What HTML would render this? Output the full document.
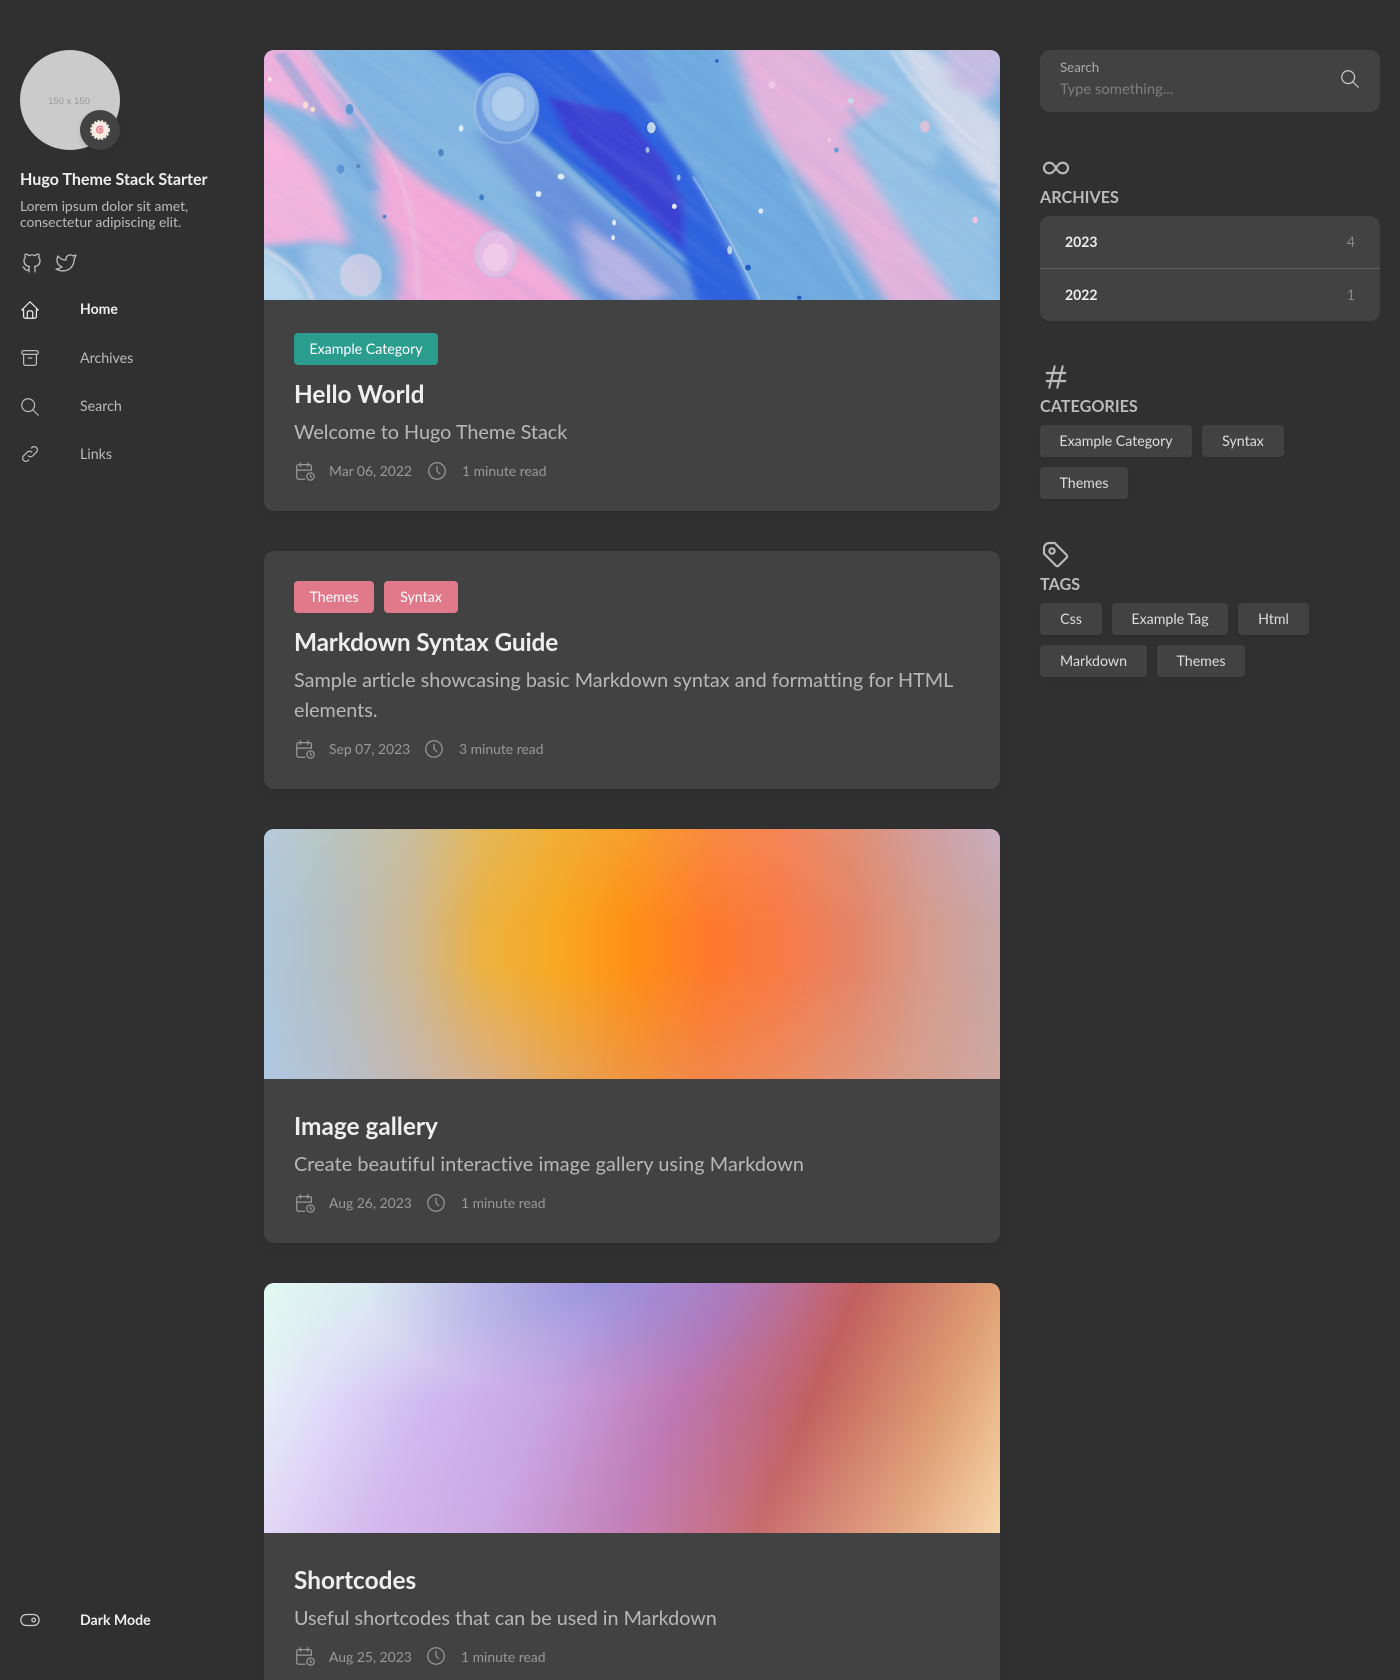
<!DOCTYPE html>
<html lang="en"><head><meta charset="utf-8"><title>Hugo Theme Stack Starter</title>
<style>
*{box-sizing:border-box;margin:0;padding:0}
html,body{width:1400px;height:1680px;overflow:hidden;background:#303030}
body{position:relative;font-family:"Lato","Carlito","Liberation Sans",sans-serif;color:#eee;font-variant-ligatures:none}
.t{position:absolute;white-space:nowrap;line-height:20px}
svg.i{position:absolute;fill:none;stroke:currentColor;stroke-width:1.33;stroke-linecap:round;stroke-linejoin:round}
.card{position:absolute;left:264px;width:736px;background:#424242;border-radius:10px;box-shadow:0 4px 8px rgba(0,0,0,.06)}
.img{position:absolute;left:264px;width:736px;height:250px;border-radius:10px 10px 0 0;overflow:hidden}
.h{font-size:24.4px;font-weight:700;color:#eee}
.s{font-size:19.8px;color:#b8b8b8}
.m{font-size:13.9px;color:#999}
.chip{position:absolute;height:32px;line-height:34px;border-radius:4px;text-align:center;font-size:14.2px;color:#fff}
.tag{position:absolute;height:32px;line-height:34px;border-radius:4px;text-align:center;font-size:14.2px;color:#ddd;background:#424242;box-shadow:0 2px 4px rgba(0,0,0,.05)}
.nav{font-size:14.2px;color:#bbb}
.wt{font-size:16.2px;font-weight:700;color:#bbb}
.box{position:absolute;left:1040px;width:340px;background:#424242;border-radius:10px}
.layer{position:absolute;inset:0}
</style></head><body>

<!-- left sidebar -->
<div style="position:absolute;left:20px;top:50px;width:100px;height:100px;border-radius:50%;background:#cbcbcb"></div>
<div class="t" style="left:20px;top:92px;width:98px;text-align:center;font:9.500px/20px 'Liberation Sans',sans-serif;color:#999">150 x 150</div>
<div style="position:absolute;left:80px;top:110px;width:40px;height:40px;border-radius:50%;background:#424242;box-shadow:0 2px 6px rgba(0,0,0,.1)"></div>
<svg style="position:absolute;left:90px;top:120px" width="20" height="20" viewBox="0 0 20 20"><circle cx="10" cy="10" r="9" fill="none" stroke="#e4e0cc" stroke-width="2" stroke-dasharray="2.200 1.400"/><circle cx="10" cy="10" r="8.600" fill="#f7ece4"/><path d="M10.400 10.600c-1 .3-1.600-.9-.8-1.700 1.200-1 3-.2 3 1.500 0 2-2.500 3-4.300 2-2-1.100-2-4 -.3-5.300 1.400-1 3-1 4.300-.2" fill="none" stroke="#ee7f8c" stroke-width="1.500" stroke-linecap="round"/></svg>

<div class="t" style="left:20px;top:170px;font-size:16.100px;font-weight:700;color:#eee">Hugo Theme Stack Starter</div>
<div class="t" style="left:20px;top:196px;font-size:13.900px;color:#bbb">Lorem ipsum dolor sit amet,</div>
<div class="t" style="left:20px;top:212px;font-size:13.900px;color:#bbb">consectetur adipiscing elit.</div>

<svg class="i" style="left:20px;top:251px;color:#bbb" width="24" height="24" viewBox="0 0 24 24"><path d="M9 19c-4.300 1.400-4.300-2.500-6-3m12 5v-3.500c0-1 .1-1.400-.5-2 2.800-.3 5.500-1.400 5.500-6a4.600 4.600 0 0 0-1.300-3.200 4.200 4.200 0 0 0-.1-3.200s-1.100-.3-3.500 1.300a12.300 12.300 0 0 0-6.200 0C6.500 2.800 5.400 3.100 5.400 3.100a4.200 4.200 0 0 0-.1 3.200A4.600 4.600 0 0 0 4 9.500c0 4.600 2.700 5.700 5.500 6-.6.6-.6 1.200-.5 2V21"/></svg>
<svg class="i" style="left:54px;top:251px;color:#bbb" width="24" height="24" viewBox="0 0 24 24"><path d="M22 4.010c-1 .49-1.980.689-3 .99-1.121-1.265-2.783-1.335-4.380-.737S11.977 6.323 12 8v1c-3.245.083-6.135-1.395-8-4 0 0-4.182 7.433 4 11-1.872 1.247-3.739 2.088-6 2 3.308 1.803 6.913 2.423 10.034 1.517 3.580-1.040 6.522-3.723 7.651-7.742a13.840 13.840 0 0 0 .497-3.753c-.002-.249 1.510-2.772 1.818-4.013z"/></svg>

<svg class="i" style="left:19px;top:299px;color:#eee" width="22" height="22" viewBox="0 0 24 24"><polyline points="5 12 3 12 12 3 21 12 19 12"/><path d="M5 12v7a2 2 0 0 0 2 2h10a2 2 0 0 0 2-2v-7"/><path d="M9 21v-6a2 2 0 0 1 2-2h2a2 2 0 0 1 2 2v6"/></svg>
<div class="t" style="left:80px;top:299px;font-size:14px;font-weight:700;color:#eee">Home</div>
<svg class="i" style="left:19px;top:347px;color:#bbb" width="22" height="22" viewBox="0 0 24 24"><rect x="3" y="4" width="18" height="4" rx="2"/><path d="M5 8v10a2 2 0 0 0 2 2h10a2 2 0 0 0 2-2V8"/><line x1="10" y1="12" x2="14" y2="12"/></svg>
<div class="t nav" style="left:80px;top:349px">Archives</div>
<svg class="i" style="left:19px;top:396px;color:#bbb" width="22" height="22" viewBox="0 0 24 24"><circle cx="10" cy="10" r="7"/><line x1="21" y1="21" x2="15" y2="15"/></svg>
<div class="t nav" style="left:80px;top:397px">Search</div>
<svg class="i" style="left:19px;top:443px;color:#bbb" width="22" height="22" viewBox="0 0 24 24"><path d="M10 14a3.500 3.500 0 0 0 5 0l4-4a3.500 3.500 0 0 0-5-5l-.5.5"/><path d="M14 10a3.500 3.500 0 0 0-5 0l-4 4a3.500 3.500 0 0 0 5 5l.5-.5"/></svg>
<div class="t nav" style="left:80px;top:445px">Links</div>
<svg class="i" style="left:19px;top:1609px;color:#ccc" width="22" height="22" viewBox="0 0 24 24"><circle cx="16" cy="12" r="2"/><rect x="2" y="6" width="20" height="12" rx="6"/></svg>
<div class="t" style="left:80px;top:1611px;font-size:14.100px;font-weight:700;color:#eee">Dark Mode</div>

<!-- card 1 -->
<div class="card" style="top:50px;height:461px"></div>
<div class="img" style="top:50px">
<svg width="736" height="250" viewBox="8 60 1539 750" preserveAspectRatio="none" style="display:block">
<defs>
<filter id="b" x="-10%" y="-10%" width="120%" height="120%" color-interpolation-filters="sRGB"><feTurbulence type="fractalNoise" baseFrequency=".005 .009" numOctaves="2" seed="7" result="n"/><feDisplacementMap in="SourceGraphic" in2="n" scale="16" result="d"/><feGaussianBlur in="d" stdDeviation="14 10"/></filter>
<filter id="d" x="-10%" y="-10%" width="120%" height="120%"><feGaussianBlur stdDeviation="7 6"/></filter>
<filter id="b2" x="-10%" y="-10%" width="120%" height="120%"><feGaussianBlur stdDeviation="4"/></filter>
<filter id="b3" x="-20%" y="-20%" width="140%" height="140%"><feGaussianBlur stdDeviation="1.500"/></filter>
<filter id="st" x="0" y="0" width="100%" height="100%" color-interpolation-filters="sRGB"><feTurbulence type="fractalNoise" baseFrequency=".003 .03" numOctaves="2" seed="11"/><feColorMatrix values="0 0 0 0 .25 0 0 0 0 .45 0 0 0 0 .85 1.600 0 0 0 -.55"/></filter>
<filter id="st2" x="0" y="0" width="100%" height="100%" color-interpolation-filters="sRGB"><feTurbulence type="fractalNoise" baseFrequency=".003 .035" numOctaves="2" seed="23"/><feColorMatrix values="0 0 0 0 1 0 0 0 0 1 0 0 0 0 1 1.800 0 0 0 -.7"/></filter>
</defs>
<rect x="0" y="0" width="1560" height="820" fill="#84b7e1"/>
<g filter="url(#b)">
<path d="M-20 40H95Q130 130 175 215L200 300 60 225-20 190Z" fill="#f1b2dd"/>
<path d="M-20 225Q60 300 120 420 170 530 185 650 120 620 60 640L-20 650Z" fill="#f7b6de"/>
<path d="M-20 650Q60 660 100 820H-20Z" fill="#b9d9ec"/>
<path d="M230 300Q310 440 420 520 560 640 680 830H280Q320 700 250 560Z" fill="#f4abd9"/>
<path d="M90 650Q180 600 260 820H110Z" fill="#a4c8e8"/>
<path d="M450 300L560 340 700 520 890 720 920 830H700L600 600Z" fill="#6a94dc"/>
<path d="M700 40L950 40 1050 300 1150 550 1310 830H1040L960 600 900 420 800 220Z" fill="#6fabdf"/>
<path d="M990 40H1150L1230 150 1320 210 1220 310 1300 500 1460 830H1320L1200 560 1040 280Z" fill="#e6b4dc"/>
<path d="M1150 40H1320L1450 300 1400 430 1530 560 1560 830H1460L1300 500 1220 300 1320 200 1230 150Z" fill="#96c4e6"/>
<path d="M1330 40L1400 60 1560 290V540L1440 340Z" fill="#d4dcec"/>
<path d="M1420 40H1560V110L1530 220 1450 170Z" fill="#c8bfe2"/>
<path d="M650 560L780 680 860 790 780 820 700 760Z" fill="#b6b4e4"/>
</g>
<g filter="url(#d)">
<path d="M340 40H680L800 220 900 420 965 600 1040 830H915L885 680 700 460 560 300 460 160Z" fill="#2d62de"/>
<path d="M600 200L760 250 850 400 885 520 885 660 780 500 650 330Z" fill="#3a40d2"/>
<path d="M700 40H790L850 220 800 210Z" fill="#6a9ae0"/>
</g>
<g filter="url(#b2)" fill="none">
<path d="M100 60Q180 200 250 340 330 480 330 810" stroke="#ecc0e2" stroke-width="10" opacity=".7"/>
<path d="M600 330Q700 480 900 720" stroke="#2d70d8" stroke-width="8" opacity=".8"/>
<path d="M1020 200Q1130 500 1260 810" stroke="#9fc8ea" stroke-width="14" opacity=".5"/>
<path d="M1320 60Q1380 210 1547 400" stroke="#eef0f6" stroke-width="8" opacity=".5"/>
<path d="M1230 230Q1330 420 1540 470" stroke="#7fb4de" stroke-width="18" opacity=".4"/>
<path d="M40 70Q150 300 240 480" stroke="#6ba2da" stroke-width="26" opacity=".45"/>
<path d="M8 660Q90 720 110 810" stroke="#f0e6f0" stroke-width="10" opacity=".6"/>
</g>
<g transform="rotate(48 770 435)">
<rect x="-500" y="-800" width="2600" height="2500" filter="url(#st)" opacity=".1"/>
<rect x="-500" y="-800" width="2600" height="2500" filter="url(#st2)" opacity=".08"/>
</g>
<g filter="url(#b3)">
<path d="M905 440Q960 560 1045 810" fill="none" stroke="#dfe8f8" stroke-width="2.500" opacity=".8"/>
<ellipse cx="515" cy="235" rx="66" ry="104" fill="#6f9fe0" stroke="#a9c9ec" stroke-width="3" opacity=".95"/>
<ellipse cx="520" cy="222" rx="56" ry="82" fill="#95bbe8"/>
<ellipse cx="518" cy="222" rx="36" ry="54" fill="#aecdec" stroke="#88aee2" stroke-width="3"/>
<ellipse cx="492" cy="672" rx="42" ry="68" fill="#e4bee6" stroke="#b8cde8" stroke-width="3" opacity=".9"/>
<ellipse cx="492" cy="682" rx="26" ry="42" fill="#f0d0e8" opacity=".8"/>
<ellipse cx="210" cy="735" rx="42" ry="62" fill="#d8d0e6" stroke="#cfdcea" stroke-width="3" opacity=".75"/>
</g>
<g fill="#dfeaf8"><ellipse cx="95" cy="225" rx="6" ry="10" fill="#f6dcd0"/><ellipse cx="110" cy="238" rx="5" ry="8" fill="#f6dcd0"/><ellipse cx="582" cy="492" rx="6" ry="9"/><ellipse cx="629" cy="440" rx="7" ry="9"/><ellipse cx="866" cy="529" rx="5" ry="8"/><ellipse cx="818" cy="293" rx="10" ry="18" fill="#bcd4ee" stroke="#1f4fc0" stroke-width="1.500"/><ellipse cx="982" cy="660" rx="6" ry="14" fill="#b9d2ee" stroke="#1f4fc0"/><ellipse cx="1020" cy="713" rx="6" ry="9" fill="#1f5cc4"/><ellipse cx="1495" cy="570" rx="6" ry="10" fill="#f2c0e0"/><ellipse cx="1390" cy="290" rx="10" ry="18" fill="#dcbfd8"/><ellipse cx="1235" cy="212" rx="6" ry="9" fill="#c7d6ea"/><ellipse cx="20" cy="148" rx="4" ry="7" fill="#f8dfe6"/><ellipse cx="955" cy="93" rx="4" ry="6" fill="#2f6cc8"/><ellipse cx="378" cy="368" rx="6" ry="11" fill="#4f86c6"/><ellipse cx="463" cy="502" rx="5" ry="9" fill="#3f7cc8"/><ellipse cx="168" cy="417" rx="8" ry="14" fill="#5c96d4"/><ellipse cx="187" cy="238" rx="8" ry="16" fill="#5c96d4"/><ellipse cx="420" cy="295" rx="5" ry="10"/><ellipse cx="1047" cy="543" rx="5" ry="8"/><ellipse cx="740" cy="578" rx="4" ry="9"/><ellipse cx="738" cy="623" rx="4" ry="8"/><ellipse cx="1127" cy="803" rx="5" ry="6" fill="#1f5cc4"/><ellipse cx="260" cy="560" rx="4" ry="6" fill="#4f86c6"/><ellipse cx="205" cy="408" rx="4" ry="6" fill="#4f86c6"/><ellipse cx="60" cy="210" rx="5" ry="7" fill="#f0a8d4"/><ellipse cx="810" cy="360" rx="4" ry="9" fill="#9cbdea"/><ellipse cx="875" cy="443" rx="4" ry="9" fill="#9cbdea"/><ellipse cx="1205" cy="360" rx="5" ry="8" fill="#6a9cd8"/><ellipse cx="1190" cy="330" rx="4" ry="7" fill="#f2c6e2"/><ellipse cx="1070" cy="165" rx="7" ry="11" fill="#efc8e6"/></g>
</svg>
</div>
<div class="chip" style="left:294px;top:333px;width:144px;background:#2a9d8f">Example Category</div>
<div class="t h" style="left:294px;top:385px">Hello World</div>
<div class="t s" style="left:294px;top:422px">Welcome to Hugo Theme Stack</div>
<svg class="i" style="left:294px;top:460px;color:#999" width="22" height="22" viewBox="0 0 24 24"><path d="M11.795 21H5a2 2 0 0 1-2-2V7a2 2 0 0 1 2-2h12a2 2 0 0 1 2 2v4"/><circle cx="18" cy="18" r="4"/><path d="M15 3v4"/><path d="M7 3v4"/><path d="M3 11h16"/><path d="M18 16.496V18l1 1"/></svg>
<div class="t m" style="left:329px;top:461px">Mar 06, 2022</div>
<svg class="i" style="left:426px;top:460px;color:#999" width="22" height="22" viewBox="0 0 24 24"><circle cx="12" cy="12" r="9"/><polyline points="12 7 12 12 15 15"/></svg>
<div class="t m" style="left:462px;top:461px">1 minute read</div>

<!-- card 2 -->
<div class="card" style="top:551px;height:238px"></div>
<div class="chip" style="left:294px;top:581px;width:80px;background:#e07a8b">Themes</div>
<div class="chip" style="left:384px;top:581px;width:74px;background:#e07a8b">Syntax</div>
<div class="t h" style="left:294px;top:633px;letter-spacing:-.15px">Markdown Syntax Guide</div>
<div class="t s" style="left:294px;top:670px;letter-spacing:.015px">Sample article showcasing basic Markdown syntax and formatting for HTML</div>
<div class="t s" style="left:294px;top:700px">elements.</div>
<svg class="i" style="left:294px;top:738px;color:#999" width="22" height="22" viewBox="0 0 24 24"><path d="M11.795 21H5a2 2 0 0 1-2-2V7a2 2 0 0 1 2-2h12a2 2 0 0 1 2 2v4"/><circle cx="18" cy="18" r="4"/><path d="M15 3v4"/><path d="M7 3v4"/><path d="M3 11h16"/><path d="M18 16.496V18l1 1"/></svg>
<div class="t m" style="left:329px;top:739px">Sep 07, 2023</div>
<svg class="i" style="left:423px;top:738px;color:#999" width="22" height="22" viewBox="0 0 24 24"><circle cx="12" cy="12" r="9"/><polyline points="12 7 12 12 15 15"/></svg>
<div class="t m" style="left:459px;top:739px">3 minute read</div>

<!-- card 3 -->
<div class="card" style="top:829px;height:414px"></div>
<div class="img" style="top:829px;background:linear-gradient(90deg,#aec8dc 0%,#b6bfc0 10%,#cdb894 20%,#edb240 30%,#f9a820 40%,#ff8f14 50%,#ff7a2c 60%,#f97b45 70%,#e58468 80%,#d59c8c 90%,#c7a7a7 100%)">
<div class="layer" style="background:linear-gradient(90deg,#b6cbdc 0%,#b9c4bd 10%,#c9bd9e 20%,#e4b758 30%,#f0ae34 40%,#f79e2c 50%,#f98a40 60%,#f58456 70%,#e08f74 80%,#cf9f9f 90%,#c8aec0 100%);-webkit-mask-image:linear-gradient(#000,transparent 40%);mask-image:linear-gradient(#000,transparent 40%)"></div>
<div class="layer" style="background:linear-gradient(90deg,#aec8e0 0%,#b6c0cc 10%,#c5b7ad 20%,#d9b088 30%,#e6a658 40%,#f09440 50%,#f28648 60%,#ec8a5c 70%,#e09478 80%,#d5a091 90%,#cca8a0 100%);-webkit-mask-image:linear-gradient(transparent 55%,#000);mask-image:linear-gradient(transparent 55%,#000)"></div>
</div>
<div class="t h" style="left:294px;top:1117px">Image gallery</div>
<div class="t s" style="left:294px;top:1154px;letter-spacing:.11px">Create beautiful interactive image gallery using Markdown</div>
<svg class="i" style="left:294px;top:1192px;color:#999" width="22" height="22" viewBox="0 0 24 24"><path d="M11.795 21H5a2 2 0 0 1-2-2V7a2 2 0 0 1 2-2h12a2 2 0 0 1 2 2v4"/><circle cx="18" cy="18" r="4"/><path d="M15 3v4"/><path d="M7 3v4"/><path d="M3 11h16"/><path d="M18 16.496V18l1 1"/></svg>
<div class="t m" style="left:329px;top:1193px">Aug 26, 2023</div>
<svg class="i" style="left:425px;top:1192px;color:#999" width="22" height="22" viewBox="0 0 24 24"><circle cx="12" cy="12" r="9"/><polyline points="12 7 12 12 15 15"/></svg>
<div class="t m" style="left:461px;top:1193px">1 minute read</div>

<!-- card 4 -->
<div class="card" style="top:1283px;height:414px"></div>
<div class="img" style="top:1283px;background:linear-gradient(113deg,#e8fdf4 0%,#e0dcfa 12.600%,#d0b9f0 25%,#c8a5e4 39%,#bd78b4 55%,#c0687f 66%,#c2605f 71%,#cf7c68 78%,#dfa074 87.400%,#f8d8a4 100%)">
<div class="layer" style="background:radial-gradient(ellipse 230px 110px at 330px 0,rgba(125,130,215,.6),rgba(125,130,215,0) 100%),radial-gradient(ellipse 280px 120px at 110px 0,rgba(215,245,235,.6),rgba(215,245,235,0) 100%),linear-gradient(rgba(240,190,220,0) 50%,rgba(240,190,220,.12))"></div>
</div>
<div class="t h" style="left:294px;top:1571px">Shortcodes</div>
<div class="t s" style="left:294px;top:1608px;letter-spacing:-.02px">Useful shortcodes that can be used in Markdown</div>
<svg class="i" style="left:294px;top:1645px;color:#999" width="22" height="22" viewBox="0 0 24 24"><path d="M11.795 21H5a2 2 0 0 1-2-2V7a2 2 0 0 1 2-2h12a2 2 0 0 1 2 2v4"/><circle cx="18" cy="18" r="4"/><path d="M15 3v4"/><path d="M7 3v4"/><path d="M3 11h16"/><path d="M18 16.496V18l1 1"/></svg>
<div class="t m" style="left:329px;top:1647px">Aug 25, 2023</div>
<svg class="i" style="left:425px;top:1645px;color:#999" width="22" height="22" viewBox="0 0 24 24"><circle cx="12" cy="12" r="9"/><polyline points="12 7 12 12 15 15"/></svg>
<div class="t m" style="left:461px;top:1647px">1 minute read</div>

<!-- right sidebar -->
<div class="box" style="top:50px;height:62px"></div>
<div class="t" style="left:1060px;top:57px;font-size:13.300px;color:#aaa">Search</div>
<div class="t" style="left:1060px;top:79px;font-size:14.800px;color:#7e7e7e">Type something...</div>
<svg class="i" style="left:1339px;top:68px;color:#ccc" width="22" height="22" viewBox="0 0 24 24"><circle cx="10" cy="10" r="7"/><line x1="21" y1="21" x2="15" y2="15"/></svg>

<svg class="i" style="left:1040px;top:152px;color:#bbb;stroke-width:1.6" width="32" height="32" viewBox="0 0 24 24"><path d="M9.828 9.172a4 4 0 1 0 0 5.656A10 10 0 0 0 12 12a10 10 0 0 1 2.172-2.828 4 4 0 1 1 0 5.656A10 10 0 0 1 12 12a10 10 0 0 0-2.172-2.828"/></svg>
<div class="t wt" style="left:1040px;top:188px">ARCHIVES</div>
<div class="box" style="top:216px;height:105px"></div>
<div style="position:absolute;left:1040px;top:268px;width:340px;height:1px;background:#5e5e5e"></div>
<div class="t" style="left:1065px;top:232px;font-size:14px;font-weight:700;color:#eee">2023</div>
<div class="t" style="left:1335px;width:20px;text-align:right;top:232px;font-size:14px;color:#888">4</div>
<div class="t" style="left:1065px;top:285px;font-size:14px;font-weight:700;color:#eee">2022</div>
<div class="t" style="left:1335px;width:20px;text-align:right;top:285px;font-size:14px;color:#888">1</div>

<svg class="i" style="left:1040px;top:361px;color:#bbb;stroke-width:1.6" width="32" height="32" viewBox="0 0 24 24"><line x1="5" y1="9" x2="19" y2="9"/><line x1="5" y1="15" x2="19" y2="15"/><line x1="11" y1="4" x2="7" y2="20"/><line x1="17" y1="4" x2="13" y2="20"/></svg>
<div class="t wt" style="left:1040px;top:397px">CATEGORIES</div>
<div class="tag" style="left:1040px;top:425px;width:152px">Example Category</div>
<div class="tag" style="left:1202px;top:425px;width:82px">Syntax</div>
<div class="tag" style="left:1040px;top:467px;width:88px">Themes</div>

<svg class="i" style="left:1040px;top:539px;color:#bbb;stroke-width:1.6" width="32" height="32" viewBox="0 0 24 24"><path d="M11 3l9 9a1.500 1.500 0 0 1 0 2l-6 6a1.500 1.500 0 0 1-2 0l-9-9V7a4 4 0 0 1 4-4h4"/><circle cx="9" cy="9" r="2"/></svg>
<div class="t wt" style="left:1040px;top:575px">TAGS</div>
<div class="tag" style="left:1040px;top:603px;width:62px">Css</div>
<div class="tag" style="left:1112px;top:603px;width:116px">Example Tag</div>
<div class="tag" style="left:1238px;top:603px;width:71px">Html</div>
<div class="tag" style="left:1040px;top:645px;width:107px">Markdown</div>
<div class="tag" style="left:1157px;top:645px;width:88px">Themes</div>
</body></html>
